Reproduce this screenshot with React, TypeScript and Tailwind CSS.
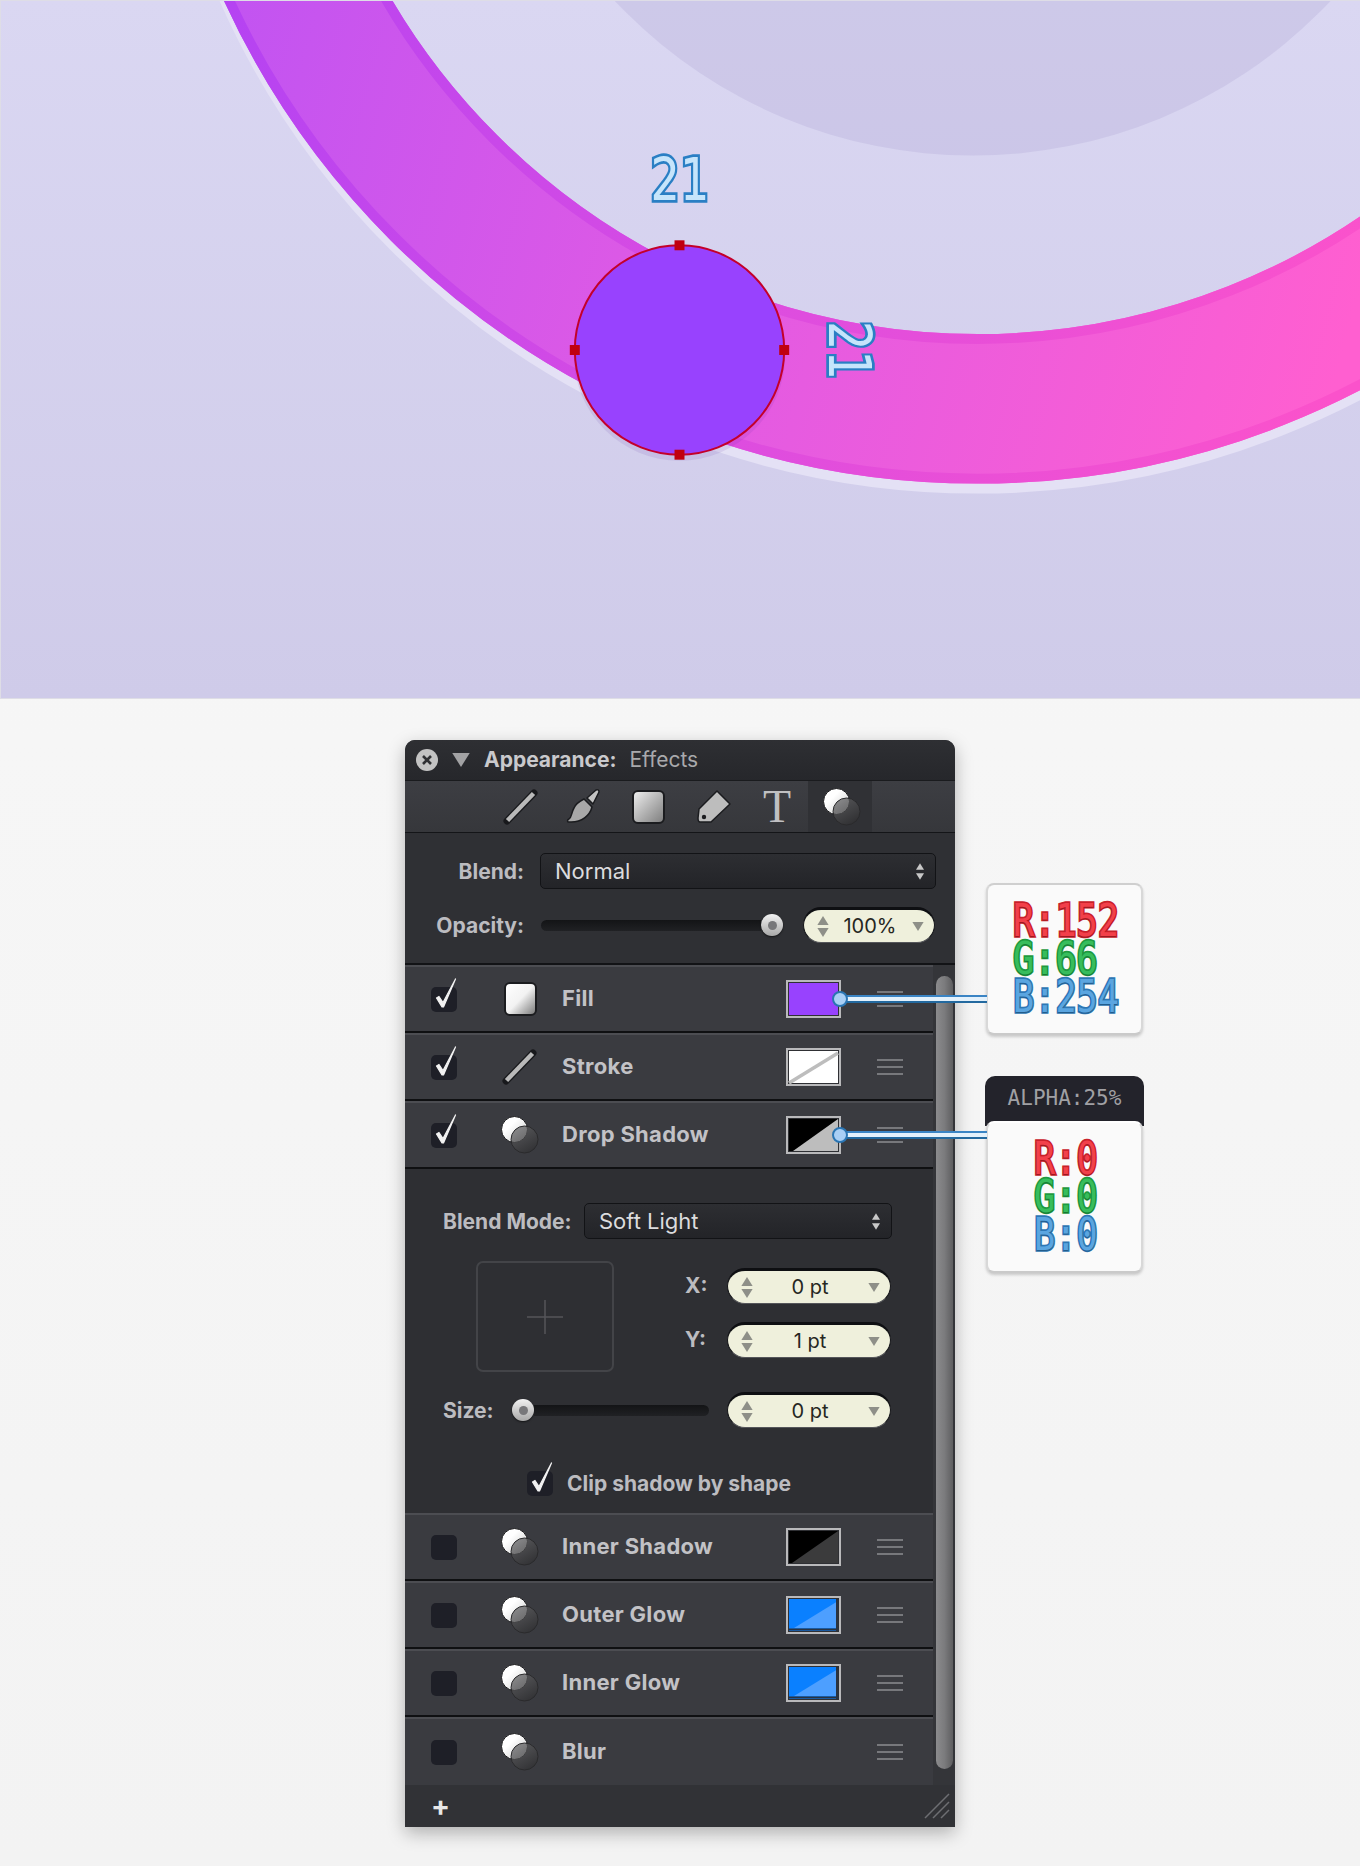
const ui = { fontFamily: 'Inter, "Liberation Sans", sans-serif' };

function Tri({ up, className }: { up?: boolean; className: string }) {
  return (
    <svg viewBox="0 0 10 8" className={className}>
      <polygon points={up ? '5,0 10,8 0,8' : '0,0 10,0 5,8'} fill="currentColor" />
    </svg>
  );
}

function Pill({ value, className = 'w-[164px]' }: { value: string; className?: string }) {
  return (
    <div className={`flex h-[36px] items-center rounded-full border-t-[3px] border-x border-b border-x-[#15161a] border-t-[#0e0f12] border-b-[#55565a] bg-[#eff0dc] pl-[13px] pr-[9px] text-[#8e8f88] ${className}`}>
      <div className="flex flex-col gap-[3px]">
        <Tri up className="h-[9px] w-[12px]" />
        <Tri className="h-[9px] w-[12px]" />
      </div>
      <span className="flex-1 text-center text-[20px] leading-none text-[#26271f]">{value}</span>
      <Tri className="h-[9px] w-[14px]" />
    </div>
  );
}

function Select({ value, className }: { value: string; className: string }) {
  return (
    <div className={`flex h-[36px] items-center justify-between rounded-[5px] border border-[#121316] bg-gradient-to-b from-[#2d2e32] to-[#232428] pl-[14px] pr-[11px] text-[22px] leading-none text-[#dcdcde] ${className}`}>
      <span>{value}</span>
      <div className="flex flex-col gap-[3px] text-[#c8c8c8]">
        <Tri up className="h-[7px] w-[8px]" />
        <Tri className="h-[7px] w-[8px]" />
      </div>
    </div>
  );
}

function Thumb() {
  return (
    <div className="flex h-[22px] w-[22px] shrink-0 items-center justify-center rounded-full bg-gradient-to-b from-[#f2f2f2] to-[#a8a8a8] shadow-[0_1px_2px_rgba(0,0,0,0.6)]">
      <div className="h-[9px] w-[9px] rounded-full bg-[#77777a]" />
    </div>
  );
}

function Checkbox({ checked }: { checked?: boolean }) {
  return (
    <div className="relative h-[25px] w-[26px] shrink-0 rounded-[5px] bg-[#1e1f27]">
      {checked && (
        <svg viewBox="0 0 26 34" className="absolute left-0 top-[-9px] h-[34px] w-[26px]">
          <path d="M5.5 20 L8 18.5 L12 24.5 L24.5 1 L12.5 29 L11 29 Z" fill="#f2f2f2" stroke="#f2f2f2" strokeWidth="1.2" strokeLinejoin="round" />
        </svg>
      )}
    </div>
  );
}

function EffectIcon() {
  return (
    <svg viewBox="0 0 40 40" className="h-[40px] w-[40px]">
      <defs>
        <linearGradient id="fxA" x1="0" y1="0" x2="1" y2="1">
          <stop offset="0.35" stopColor="#ffffff" />
          <stop offset="1" stopColor="#c8c8c8" />
        </linearGradient>
        <linearGradient id="fxB" x1="0" y1="0" x2="0.6" y2="1">
          <stop offset="0" stopColor="#6a6a6c" />
          <stop offset="1" stopColor="#323234" />
        </linearGradient>
      </defs>
      <circle cx="14.5" cy="14.5" r="13" fill="url(#fxA)" stroke="#1a1a1c" strokeWidth="1" />
      <circle cx="24.5" cy="24.5" r="13.5" fill="url(#fxB)" fillOpacity="0.74" stroke="#2a2a2c" strokeWidth="1" />
    </svg>
  );
}

function LineIcon() {
  return (
    <svg viewBox="0 0 36 36" className="h-[36px] w-[36px]">
      <path d="M4 32 L31 4" stroke="#18191c" strokeWidth="7" strokeLinecap="round" />
      <path d="M4.5 31.5 L30.5 4.5" stroke="#b9b9b9" strokeWidth="4.5" />
    </svg>
  );
}

function SquareIcon({ bright }: { bright?: boolean }) {
  return (
    <div className={`h-[34px] w-[33px] rounded-[6px] border-2 border-[#1b1c1f] bg-gradient-to-br ${bright ? 'from-[#ffffff] via-[#f2f2f2] to-[#7d7d7d]' : 'from-[#eeeeee] to-[#808080]'}`} />
  );
}

type SwatchKind = 'fill' | 'stroke' | 'shadow' | 'inner' | 'glow';

function Swatch({ kind }: { kind: SwatchKind }) {
  return (
    <svg viewBox="0 0 55 38" className="h-[38px] w-[55px]">
      <rect x="0" y="0" width="55" height="38" fill="#2f3034" />
      <rect x="3" y="3" width="49" height="32" fill={kind === 'fill' ? '#9842fe' : kind === 'stroke' ? '#ffffff' : kind === 'glow' ? '#0a80ff' : '#000000'} />
      {kind === 'stroke' && <path d="M3 35 L52 5" stroke="#bdbdbd" strokeWidth="3.5" />}
      {kind === 'shadow' && <polygon points="52,3 52,35 7,35" fill="#bdbdbd" />}
      {kind === 'inner' && <polygon points="52,3 52,35 6,35" fill="#3b3b3c" />}
      {kind === 'glow' && <polygon points="52,5 52,32 8,32" fill="#4d9fff" />}
      {kind === 'glow' && <path d="M3 33.5 H53 M51 3 V35" stroke="#2a3340" strokeWidth="2" fill="none" />}
      <rect x="1" y="1" width="53" height="36" fill="none" stroke="#b9b9bb" strokeWidth="2" />
    </svg>
  );
}

function Grip() {
  return (
    <div className="flex w-[26px] flex-col gap-[5px]">
      <div className="h-[2px] bg-[#77787c]" />
      <div className="h-[2px] bg-[#77787c]" />
      <div className="h-[2px] bg-[#77787c]" />
    </div>
  );
}

function Row({
  label,
  checked,
  icon,
  swatch,
  last,
}: {
  label: string;
  checked?: boolean;
  icon: React.ReactNode;
  swatch?: SwatchKind;
  last?: boolean;
}) {
  return (
    <div className={`flex h-[68px] items-center border-t-2 border-t-[#4c4d52] bg-[#3a3b40] pl-[26px] ${last ? '' : 'border-b-2 border-b-[#0f1012]'}`}>
      <Checkbox checked={checked} />
      <div className="ml-[43px] flex w-[40px] justify-center">{icon}</div>
      <span className="mb-[2px] ml-[22px] w-[224px] text-[22px] font-bold leading-none tracking-[0.3px] text-[#c2c2c6]">{label}</span>
      <div className="h-[38px] w-[55px]">{swatch && <Swatch kind={swatch} />}</div>
      <div className="ml-[36px]">
        <Grip />
      </div>
    </div>
  );
}

function Callout({ top }: { top: number }) {
  return (
    <div className="absolute left-[434px] z-10 w-[148px]" style={{ top }}>
      <div className="absolute left-0 right-0 top-[-4px] h-[8px] border-y-2 border-t-[#3a84c4] border-b-[#23699f] bg-[#e3f1fc]" />
      <div className="absolute left-[-7px] top-[-8px] h-[16px] w-[16px] rounded-full border-2 border-[#2a75b3] bg-[#a9cff5]" />
    </div>
  );
}

function ValueLines({ r, g, b }: { r: string; g: string; b: string }) {
  const base =
    'origin-left scale-x-[0.8] whitespace-pre text-[44px] leading-[38px] [paint-order:stroke_fill] [text-shadow:0_1px_1px_rgba(0,0,0,0.25)]';
  return (
    <div style={{ fontFamily: '"DejaVu Sans Mono", monospace' }}>
      <div className={`${base} text-[#f2404a] [-webkit-text-stroke:3.5px_#c9212b]`}>{r}</div>
      <div className={`${base} text-[#37bd5c] [-webkit-text-stroke:3.5px_#1e9a40]`}>{g}</div>
      <div className={`${base} text-[#5aa5e0] [-webkit-text-stroke:3.5px_#2d77b5]`}>{b}</div>
    </div>
  );
}

function Canvas() {
  const measure = {
    fontFamily: '"DejaVu Sans", sans-serif',
    fontSize: 58,
    fill: '#c6e5fb',
    stroke: '#2a7fc4',
    strokeWidth: 5.5,
    paintOrder: 'stroke',
  } as const;
  return (
    <div className="h-[699px] border-l border-t border-b border-[#dedde6] bg-gradient-to-b from-[#dad7f2] to-[#cfcbe9]">
      <svg viewBox="0 0 1360 699" className="block h-full w-full">
        <defs>
          <linearGradient id="ring" gradientUnits="userSpaceOnUse" x1="230" y1="0" x2="1360" y2="300">
            <stop offset="0" stopColor="#c254f1" />
            <stop offset="0.45" stopColor="#e05ae4" />
            <stop offset="1" stopColor="#ff5fd0" />
          </linearGradient>
          <linearGradient id="ringDark" gradientUnits="userSpaceOnUse" x1="230" y1="0" x2="1360" y2="300">
            <stop offset="0" stopColor="#b543f2" />
            <stop offset="0.45" stopColor="#d94ce2" />
            <stop offset="1" stopColor="#fb52cb" />
          </linearGradient>
        </defs>
        <circle cx="973" cy="-338" r="493" fill="#7c70b4" fillOpacity="0.13" />
        <circle cx="978" cy="-338" r="826" fill="none" stroke="#e4e1f5" strokeWidth="12" />
        <circle cx="978" cy="-348" r="757" fill="none" stroke="url(#ring)" strokeWidth="150" />
        <circle cx="978" cy="-348" r="827" fill="none" stroke="url(#ringDark)" strokeWidth="10" />
        <circle cx="978" cy="-348" r="687" fill="none" stroke="url(#ringDark)" strokeWidth="10" />
        <circle cx="679" cy="355" r="106" fill="#5a2ca0" fillOpacity="0.1" />
        <circle cx="679" cy="350" r="105" fill="#9842fe" stroke="#c4002a" strokeWidth="2" />
        <rect x="674" y="240" width="10" height="10" fill="#c00010" />
        <rect x="674" y="450" width="10" height="10" fill="#c00010" />
        <rect x="569" y="345" width="10" height="10" fill="#c00010" />
        <rect x="779" y="345" width="10" height="10" fill="#c00010" />
        <text transform="translate(650,200) scale(0.8,1)" {...measure}>21</text>
        <text transform="translate(829,321) rotate(90) scale(0.8,1)" {...measure}>21</text>
      </svg>
    </div>
  );
}

function Panel() {
  const label = 'text-[21px] font-bold leading-none text-[#bcbcc0]';
  return (
    <div className="relative mx-auto mt-[41px] w-[550px]" style={ui}>
      <div className="overflow-hidden rounded-t-[10px] bg-[#2f3034] shadow-[0_6px_18px_rgba(0,0,0,0.28)]">
        {/* title */}
        <div className="flex h-[40px] items-center bg-gradient-to-b from-[#2e2f33] to-[#26272b] pl-[11px]">
          <div className="flex h-[22px] w-[22px] items-center justify-center rounded-full bg-[#c3c3c3]">
            <svg viewBox="0 0 12 12" className="h-[12px] w-[12px]">
              <path d="M2 2 L10 10 M10 2 L2 10" stroke="#303134" strokeWidth="2.6" />
            </svg>
          </div>
          <Tri className="ml-[14px] h-[14px] w-[18px] text-[#a2a2a4]" />
          <span className="mb-[1px] ml-[14px] text-[21px] font-bold leading-none text-[#c9c9cc]">Appearance:</span>
          <span className="mb-[1px] ml-[13px] text-[21px] leading-none text-[#a9a9ac]">Effects</span>
        </div>

        {/* tool tabs */}
        <div className="flex h-[53px] items-center border-y border-t-[#1a1b1e] border-b-[#141518] bg-gradient-to-b from-[#3d3e43] to-[#36373b]">
          <div className="ml-[98px] flex w-[36px] justify-center"><LineIcon /></div>
          <div className="ml-[27px] flex w-[36px] justify-center">
            <svg viewBox="0 0 36 36" className="h-[36px] w-[36px]">
              <path d="M21 9 L30 1 Q33 0 33 3 L27 15 Z" fill="#c4c4c4" stroke="#1b1c1f" strokeWidth="1.5" strokeLinejoin="round" />
              <path d="M18 10 L26 18 C24 26 16 34 3 33 C1 33 1 31 3 30 C6 28 5 24 8 19 C10 14 14 12 18 10 Z" fill="#a8a8a8" stroke="#1b1c1f" strokeWidth="1.5" />
            </svg>
          </div>
          <div className="ml-[28px] flex w-[36px] justify-center"><SquareIcon /></div>
          <div className="ml-[30px] flex w-[36px] justify-center">
            <svg viewBox="0 0 36 36" className="h-[36px] w-[36px]">
              <path d="M21 2 L34 15 L15 33 L4 33 C2 33 2 31 2 29 L3 20 Z" fill="#bdbdbd" stroke="#1b1c1f" strokeWidth="1.5" strokeLinejoin="round" />
              <circle cx="8" cy="28" r="2.2" fill="#1b1c1f" />
            </svg>
          </div>
          <span className="ml-[27px] flex w-[36px] justify-center text-[46px] leading-none text-[#c0c0c2]" style={{ fontFamily: '"Liberation Serif", serif' }}>T</span>
          <div className="ml-[13px] flex h-full w-[64px] items-center justify-center bg-[#303135] pl-[4px]"><EffectIcon /></div>
        </div>

        {/* blend + opacity */}
        <div className="h-[132px] border-b-2 border-[#121316] pt-[20px]">
          <div className="flex items-center">
            <span className={`w-[119px] text-right ${label}`}>Blend:</span>
            <Select value="Normal" className="ml-[16px] w-[396px]" />
          </div>
          <div className="mt-[18px] flex items-center">
            <span className={`w-[119px] text-right ${label}`}>Opacity:</span>
            <div className="ml-[17px] flex w-[242px] items-center">
              <div className="h-[11px] flex-1 rounded-l-full bg-gradient-to-b from-[#131416] to-[#202124]" />
              <Thumb />
            </div>
            <div className="ml-[20px]">
              <Pill value="100%" className="w-[132px]" />
            </div>
          </div>
        </div>

        {/* list and its scroll bar */}
        <div className="flex">
          <div className="w-[528px]">
            <Row label="Fill" checked icon={<SquareIcon bright />} swatch="fill" />
            <Row label="Stroke" checked icon={<LineIcon />} swatch="stroke" />
            <Row label="Drop Shadow" checked icon={<EffectIcon />} swatch="shadow" />

            <div className="h-[344px] bg-[#2e2f33] pt-[34px]">
              <div className="flex items-center pl-[38px]">
                <span className={`w-[141px] whitespace-nowrap ${label}`}>Blend Mode:</span>
                <Select value="Soft Light" className="w-[308px]" />
              </div>
              <div className="mt-[22px] flex pl-[71px]">
                <div className="flex h-[111px] w-[138px] items-center justify-center rounded-[7px] border-2 border-[#434448]">
                  <svg viewBox="0 0 36 34" className="h-[34px] w-[36px]">
                    <path d="M0 17 H36 M18 0 V34" stroke="#55565a" strokeWidth="1.5" />
                  </svg>
                </div>
                <div className="ml-[113px] mt-[7px] flex flex-col gap-[18px]">
                  <div className="relative">
                    <span className={`absolute left-[-42px] top-[7px] ${label}`}>X:</span>
                    <Pill value="0 pt" />
                  </div>
                  <div className="relative">
                    <span className={`absolute left-[-42px] top-[7px] ${label}`}>Y:</span>
                    <Pill value="1 pt" />
                  </div>
                </div>
              </div>
              <div className="mt-[20px] flex items-center pl-[38px]">
                <span className={`w-[69px] ${label}`}>Size:</span>
                <div className="flex w-[197px] items-center">
                  <Thumb />
                  <div className="h-[11px] flex-1 rounded-r-full bg-gradient-to-b from-[#131416] to-[#202124]" />
                </div>
                <div className="ml-[18px]">
                  <Pill value="0 pt" />
                </div>
              </div>
              <div className="mt-[43px] flex items-center pl-[122px]">
                <Checkbox checked />
                <span className={`ml-[14px] ${label}`}>Clip shadow by shape</span>
              </div>
            </div>

            <Row label="Inner Shadow" icon={<EffectIcon />} swatch="inner" />
            <Row label="Outer Glow" icon={<EffectIcon />} swatch="glow" />
            <Row label="Inner Glow" icon={<EffectIcon />} swatch="glow" />
            <Row label="Blur" icon={<EffectIcon />} last />
          </div>

          <div className="w-[22px] bg-[#343539] pb-[16px] pl-[3px] pr-[2px] pt-[11px]">
            <div className="h-full rounded-full bg-gradient-to-r from-[#8b8b8d] via-[#7b7b7d] to-[#5e5e60]" />
          </div>
        </div>

        {/* footer */}
        <div className="flex h-[42px] items-center justify-between bg-[#313236] pl-[26px] pr-[5px]">
          <span className="text-[28px] font-bold leading-none text-[#e8e8e8]">+</span>
          <svg viewBox="0 0 26 26" className="h-[26px] w-[26px]">
            <path d="M1 25 L25 1 M9 25 L25 9 M17 25 L25 17" stroke="#6d6e72" strokeWidth="1.5" />
          </svg>
        </div>
      </div>

      <Callout top={259} />
      <Callout top={395} />

      {/* R G B readouts */}
      <div className="absolute left-[581px] top-[143px] flex h-[152px] w-[157px] items-center rounded-[8px] border-2 border-t-[#cfcfcf] border-x-[#d8d8d8] border-b-[#cacaca] bg-[#fafafa] pl-[25px] shadow-[0_2px_3px_rgba(0,0,0,0.18)]">
        <ValueLines r="R:152" g="G:66" b="B:254" />
      </div>
      <div className="absolute left-[580px] top-[336px] flex h-[50px] w-[159px] justify-center rounded-t-[10px] bg-[#23232b] pt-[12px]">
        <span className="text-[21px] leading-none text-[#a0a0a4]" style={{ fontFamily: '"DejaVu Sans Mono", monospace' }}>ALPHA:25%</span>
      </div>
      <div className="absolute left-[581px] top-[381px] flex h-[152px] w-[157px] items-center rounded-[8px] border-2 border-t-[#ffffff] border-x-[#d8d8d8] border-b-[#cacaca] bg-[#fafafa] pl-[46px] shadow-[0_2px_3px_rgba(0,0,0,0.18)]">
        <ValueLines r="R:0" g="G:0" b="B:0" />
      </div>
    </div>
  );
}

export default function App() {
  return (
    <div className="h-[1866px] w-[1360px] overflow-hidden bg-gradient-to-b from-[#f8f8f8] to-[#f3f3f3]">
      <Canvas />
      <Panel />
    </div>
  );
}
